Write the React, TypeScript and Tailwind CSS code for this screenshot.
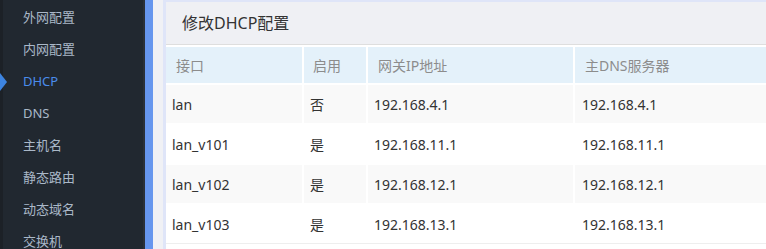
const menu = ['外网配置', '内网配置', 'DHCP', 'DNS', '主机名', '静态路由', '动态域名', '交换机'];

const rows = [
  { name: 'lan', on: '否', gw: '192.168.4.1', dns: '192.168.4.1' },
  { name: 'lan_v101', on: '是', gw: '192.168.11.1', dns: '192.168.11.1' },
  { name: 'lan_v102', on: '是', gw: '192.168.12.1', dns: '192.168.12.1' },
  { name: 'lan_v103', on: '是', gw: '192.168.13.1', dns: '192.168.13.1' },
];

const cols = 'grid grid-cols-[136px_62px_205px_1fr] gap-x-[2px]';

const App = () => {
  return (
    <div
      className="flex h-[249px] w-[766px] overflow-hidden bg-[#f0f1f5]"
      style={{ fontFamily: '"Noto Sans", "Noto Sans CJK SC", sans-serif' }}
    >
      {/* Sidebar */}
      <div className="flex w-[145px] shrink-0 bg-[#212830]">
        <div className="w-[3px] bg-[#1c2127]" />
        <ul className="flex-1 pt-[2px]">
          {menu.map((item) => {
            const active = item === 'DHCP';
            return (
              <li key={item} className="relative flex h-8 items-center pl-[20px] text-[13px]">
                {active ? (
                  <span className="absolute -left-[3px] top-1/2 h-0 w-0 -translate-y-1/2 border-y-[9px] border-l-[7px] border-y-transparent border-l-[#3d84e0]" />
                ) : null}
                <span className={active ? 'text-[#4a8cec]' : 'text-[#aab8c8]'}>{item}</span>
              </li>
            );
          })}
        </ul>
        <div className="w-[2px] bg-[#2a3038]" />
      </div>
      <div className="w-[8px] shrink-0 bg-[#6696ee]" />

      {/* Main */}
      <div className="flex-1 pl-[10px]">
        <div className="h-full border-l-[3px] border-t-[2px] border-[#dfe5f8] bg-white">
          <div className="flex h-[43px] items-center border-b border-[#dedede] bg-[#eff0f4] pl-[16px] text-[16px] text-[#333]">
            修改DHCP配置
          </div>
          <div className="mt-[2px] flex flex-col gap-y-[2px] border-b border-[#eeeeee]">
            <div className={`${cols} h-[36px] text-[14px] text-[#8c8c8c]`}>
              <div className="flex items-center bg-[#e4f1fa] pl-[10px]">接口</div>
              <div className="flex items-center bg-[#e4f1fa] pl-[9px]">启用</div>
              <div className="flex items-center bg-[#e4f1fa] pl-[10px]">网关IP地址</div>
              <div className="flex items-center bg-[#e4f1fa] pl-[10px]">主DNS服务器</div>
            </div>
            {rows.map((row, index) => {
              const cell = index % 2 === 0 ? 'bg-[#f9f9f9]' : 'bg-white';
              return (
                <div key={row.name} className={`${cols} h-[38px] text-[14px] text-[#333]`}>
                  <div className={`flex items-center pl-[6px] ${cell}`}>{row.name}</div>
                  <div className={`flex items-center pl-[6px] ${cell}`}>{row.on}</div>
                  <div className={`flex items-center pl-[6px] ${cell}`}>{row.gw}</div>
                  <div className={`flex items-center pl-[7px] ${cell}`}>{row.dns}</div>
                </div>
              );
            })}
          </div>
        </div>
      </div>
    </div>
  );
};

export default App;
